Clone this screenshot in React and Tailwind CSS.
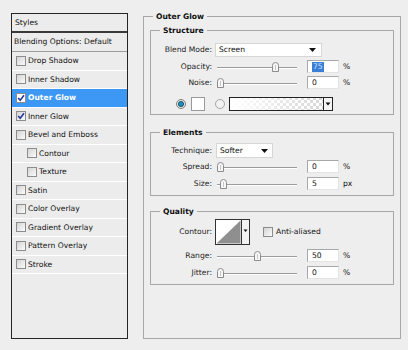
import React from 'react';

const styleRows = [
  { name: 'Drop Shadow' },
  { name: 'Inner Shadow' },
  { name: 'Outer Glow', checked: true, active: true },
  { name: 'Inner Glow', checked: true },
  { name: 'Bevel and Emboss' },
  { name: 'Contour', indent: true },
  { name: 'Texture', indent: true },
  { name: 'Satin' },
  { name: 'Color Overlay' },
  { name: 'Gradient Overlay' },
  { name: 'Pattern Overlay' },
  { name: 'Stroke' },
];

const Checkbox = ({ checked, active }) => (
  <div
    className={`w-[10px] h-[10px] border border-[#8c8c8c] flex items-center justify-center ${
      active ? 'bg-white' : 'bg-gradient-to-br from-[#d4d4d4] to-[#fbfbfb]'
    }`}
  >
    {checked && (
      <svg width="8" height="8" viewBox="0 0 8 8">
        <path d="M1.2 4 L3.2 6.3 L7 1.3" fill="none" stroke="#23389c" strokeWidth="1.6" />
      </svg>
    )}
  </div>
);

const Thumb = () => (
  <svg width="7" height="10" viewBox="0 0 7 10">
    <path d="M0.5 9.5 V3.5 Q0.5 0.5 3.5 0.5 Q6.5 0.5 6.5 3.5 V9.5 Z" fill="#f7f7f7" stroke="#8a8a8a" />
    <line x1="3.5" y1="3" x2="3.5" y2="8" stroke="#c4c4c4" />
  </svg>
);

const Slider = ({ pct }) => (
  <div className="relative w-[80px] h-[10px] ml-[5px]">
    <div className="absolute left-0 right-0 top-[5px] h-px bg-[#9b9b9b]" />
    <div className="absolute left-0 right-0 top-[6px] h-px bg-white" />
    <div className="absolute top-0" style={{ left: `${(pct * 73) / 100}px` }}>
      <Thumb />
    </div>
  </div>
);

const Arrow = () => (
  <svg width="7" height="4" viewBox="0 0 7 4">
    <path d="M0 0 H7 L3.5 4 Z" fill="#111" />
  </svg>
);

const Field = ({ value, selected }) => (
  <div className="ml-[10px] w-[32px] h-[13px] bg-white border border-t-[#a8a8a8] border-l-[#a8a8a8] border-r-[#e4e4e4] border-b-[#e4e4e4] flex items-center pl-[4px]">
    {selected ? <span className="bg-[#3b7ed6] text-[#cfe3ff] leading-[10px] px-px">{value}</span> : value}
  </div>
);

const Label = ({ children }) => (
  <div className="w-[61px] shrink-0 text-right text-[#222]">{children}</div>
);

const SliderRow = ({ label, pct, value, unit, selected, mt }) => (
  <div className={`flex items-center h-[13px] ${mt}`}>
    <Label>{label}</Label>
    <Slider pct={pct} />
    <Field value={value} selected={selected} />
    <span className="ml-[4px]">{unit}</span>
  </div>
);

const Radio = ({ on }) => (
  <svg width="10" height="10" viewBox="0 0 10 10">
    <circle cx="5" cy="5" r="4.5" fill={on ? '#e8e8e8' : '#f2f2f2'} stroke={on ? '#7d7d7d' : '#a5a5a5'} />
    {on && <circle cx="5" cy="5" r="2.6" fill="#1c8fb8" stroke="#0d3d5a" strokeWidth="0.8" />}
  </svg>
);

const GradientSwatch = () => (
  <svg width="104" height="14" viewBox="0 0 104 14">
    <defs>
      <pattern id="chk" width="6" height="6" patternUnits="userSpaceOnUse">
        <rect width="6" height="6" fill="#fff" />
        <rect width="3" height="3" fill="#d6d6d6" />
        <rect x="3" y="3" width="3" height="3" fill="#d6d6d6" />
      </pattern>
      <linearGradient id="fade" x1="0" x2="1" y1="0" y2="0">
        <stop offset="0" stopColor="#fff" stopOpacity="1" />
        <stop offset="1" stopColor="#fff" stopOpacity="0" />
      </linearGradient>
    </defs>
    <rect x="0.5" y="0.5" width="103" height="13" fill="url(#chk)" stroke="#222" />
    <rect x="1" y="1" width="93" height="12" fill="url(#fade)" />
    <rect x="94.5" y="0.5" width="9" height="13" fill="#f4f4f4" stroke="#222" />
    <path d="M96.5 5.5 H101.5 L99 8.5 Z" fill="#111" />
  </svg>
);

const ContourIcon = () => (
  <svg width="35" height="26" viewBox="0 0 35 26">
    <rect x="0.5" y="0.5" width="34" height="25" fill="#fff" stroke="#333" />
    <path d="M1.5 24.5 L25.5 1.5 V24.5 Z" fill="#8f8f8f" />
    <rect x="26.5" y="0.5" width="8" height="25" fill="#f3f3f3" stroke="#333" />
    <path d="M28.5 10.5 H32.5 L30.5 13 Z" fill="#111" />
  </svg>
);

const Group = ({ title, className, children }) => (
  <fieldset className={`border border-[#a7a7a7] mx-[6px] ${className}`}>
    <legend className="ml-[9px] px-[3px] font-bold leading-[13px] text-[#111]">{title}</legend>
    {children}
  </fieldset>
);

export default function App() {
  return (
    <div className="w-[408px] h-[350px] bg-[#eeeeee] flex font-['DejaVu_Sans',sans-serif] text-[7.6px] text-[#111] overflow-hidden">
      {/* Styles list */}
      <div className="ml-[11px] mt-[13px] w-[117px] h-[326px] border border-[#262626] bg-[#ececec] flex flex-col">
        <div className="h-[19px] flex items-center pl-[3px] border-b-2 border-[#3a3a3a]">Styles</div>
        <div className="h-[19px] flex items-center pl-[2px] border-b border-[#9c9c9c]">Blending Options: Default</div>
        {styleRows.map((row) => (
          <div
            key={row.name}
            className={`h-[18.5px] flex items-center border-b border-white ${
              row.indent ? 'pl-[15px]' : 'pl-[4px]'
            } ${row.active ? 'bg-[#3d97f4] text-white font-bold' : ''}`}
          >
            <Checkbox checked={row.checked} active={row.active} />
            <span className="ml-[2px]">{row.name}</span>
          </div>
        ))}
      </div>

      {/* Settings */}
      <fieldset className="ml-[15px] mt-[10px] mb-[11px] w-[258px] border border-[#a7a7a7] flex flex-col">
        <legend className="ml-[9px] px-[3px] font-bold leading-[13px]">Outer Glow</legend>

        <Group title="Structure" className="mt-px pb-[3px]">
          <div className="flex items-center h-[14px] mt-[6px]">
            <Label>Blend Mode:</Label>
            <div className="ml-[3px] w-[107px] h-[14px] bg-white border border-[#d6d6d6] flex items-center justify-between pl-[3px] pr-[5px]">
              <span>Screen</span>
              <Arrow />
            </div>
          </div>
          <SliderRow label="Opacity:" pct={75} value="75" unit="%" selected mt="mt-[3px]" />
          <SliderRow label="Noise:" pct={0} value="0" unit="%" mt="mt-[3px]" />
          <div className="flex items-center h-[14px] mt-[8px] pl-[25px]">
            <Radio on />
            <div className="ml-[5px] w-[14px] h-[14px] bg-white border border-[#9a9a9a]" />
            <div className="ml-[10px]">
              <Radio />
            </div>
            <div className="ml-[4px] flex">
              <GradientSwatch />
            </div>
          </div>
        </Group>

        <Group title="Elements" className="mt-[11px] pb-[5px]">
          <div className="flex items-center h-[15px] mt-[4px]">
            <Label>Technique:</Label>
            <div className="ml-[4px] w-[57px] h-[15px] bg-white border border-[#d6d6d6] flex items-center justify-between pl-[3px] pr-[4px]">
              <span>Softer</span>
              <Arrow />
            </div>
          </div>
          <SliderRow label="Spread:" pct={0} value="0" unit="%" mt="mt-[2px]" />
          <SliderRow label="Size:" pct={4} value="5" unit="px" mt="mt-[4px]" />
        </Group>

        <Group title="Quality" className="mt-[9px] pb-[5px]">
          <div className="flex items-center h-[26px] mt-px">
            <Label>Contour:</Label>
            <div className="ml-[3px] flex">
              <ContourIcon />
            </div>
            <div className="ml-[13px]">
              <Checkbox />
            </div>
            <span className="ml-[3px]">Anti-aliased</span>
          </div>
          <SliderRow label="Range:" pct={50} value="50" unit="%" mt="mt-[4px]" />
          <SliderRow label="Jitter:" pct={0} value="0" unit="%" mt="mt-[4px]" />
        </Group>
      </fieldset>
    </div>
  );
}
